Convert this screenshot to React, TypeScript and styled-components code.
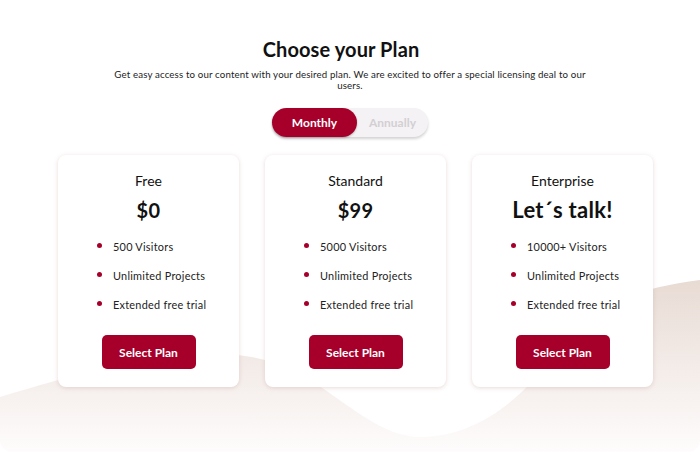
import React, { useState } from 'react';
import styled, { createGlobalStyle } from 'styled-components';

const GlobalStyle = createGlobalStyle`
  html, body {
    margin: 0;
    padding: 0;
    background: #ffffff;
  }
  body {
    font-family: Lato, "Noto Sans", sans-serif;
    color: #111;
  }
`;

const CRIMSON = '#a6002a';

type Plan = {
  name: string;
  price: string;
  wide?: boolean;
  features: string[];
};

const plans: Plan[] = [
  { name: 'Free', price: '$0', features: ['500 Visitors', 'Unlimited Projects', 'Extended free trial'] },
  { name: 'Standard', price: '$99', features: ['5000 Visitors', 'Unlimited Projects', 'Extended free trial'] },
  { name: 'Enterprise', price: 'Let´s talk!', wide: true, features: ['10000+ Visitors', 'Unlimited Projects', 'Extended free trial'] }
];

const Page = styled.div`
  position: relative;
  width: 700px;
  height: 452px;
  overflow: hidden;
  border-radius: 0 0 12px 12px;
  background: #fff;
`;

const Wave = styled.svg`
  position: absolute;
  left: 0;
  top: 0;
  width: 700px;
  height: 452px;
  z-index: 0;
`;

const Content = styled.main`
  position: relative;
  z-index: 1;
  display: flex;
  flex-direction: column;
  align-items: center;
  padding-top: 36px;
`;

const Title = styled.h1`
  margin: 0 18px 0 0;
  font-size: 20px;
  line-height: 26px;
  font-weight: 700;
  letter-spacing: 0.1px;
`;

const Subtitle = styled.p`
  margin: 7px 0 0;
  width: 480px;
  text-align: center;
  font-size: 9.7px;
  line-height: 11px;
  letter-spacing: 0.15px;
  color: #222;
`;

const Toggle = styled.div`
  margin-top: 17px;
  display: flex;
  width: 156px;
  height: 29px;
  border-radius: 15px;
  background: #f4f2f4;
  box-shadow: 0 2px 3px rgba(0, 0, 0, 0.18);
`;

const ToggleOption = styled.button<{ $active: boolean }>`
  border: none;
  padding: 0;
  height: 29px;
  border-radius: 15px;
  font-family: inherit;
  font-size: 12px;
  font-weight: 700;
  cursor: pointer;
  width: ${(p) => (p.$active ? '85px' : '71px')};
  background: ${(p) => (p.$active ? CRIMSON : 'transparent')};
  color: ${(p) => (p.$active ? '#fff' : '#d3cfd3')};
  box-shadow: ${(p) => (p.$active ? '0 1px 2px rgba(0,0,0,0.25)' : 'none')};
`;

const Cards = styled.section`
  margin: 18px 0 0 11px;
  display: flex;
  gap: 26px;
`;

const Card = styled.article`
  width: 181px;
  height: 232px;
  box-sizing: border-box;
  background: #fff;
  border-radius: 8px;
  box-shadow: 0 1px 4px rgba(190, 150, 140, 0.35);
  padding-top: 17px;
  display: flex;
  flex-direction: column;
  align-items: center;
`;

const PlanName = styled.h2`
  margin: 0;
  font-size: 14px;
  line-height: 18px;
  font-weight: 400;
`;

const Price = styled.div<{ $wide?: boolean }>`
  margin-top: 6px;
  font-size: ${(p) => (p.$wide ? '22px' : '20px')};
  line-height: 28px;
  font-weight: 700;
  letter-spacing: 0.3px;
`;

const Features = styled.ul`
  list-style: none;
  margin: 16px 0 0;
  padding: 0 0 0 39px;
  align-self: stretch;
  display: flex;
  flex-direction: column;
  gap: 15px;
`;

const Feature = styled.li`
  display: flex;
  align-items: center;
  font-size: 10.9px;
  line-height: 14px;
  letter-spacing: 0.25px;
  color: #222;

  &::before {
    content: '';
    width: 5px;
    height: 5px;
    border-radius: 50%;
    background: ${CRIMSON};
    margin-right: 11px;
    margin-top: -3px;
  }
`;

const SelectButton = styled.button`
  margin-top: 23px;
  width: 94px;
  height: 34px;
  border: none;
  border-radius: 5px;
  background: ${CRIMSON};
  color: #fff;
  font-family: inherit;
  font-size: 12px;
  font-weight: 700;
  cursor: pointer;
`;

export default function App() {
  const [period, setPeriod] = useState<'monthly' | 'annually'>('monthly');

  return (
    <Page>
      <GlobalStyle />
      <Wave viewBox="0 0 700 452" aria-hidden="true">
        <defs>
          <linearGradient id="waveFill" x1="0" y1="280" x2="0" y2="452" gradientUnits="userSpaceOnUse">
            <stop offset="0" stopColor="#e8dbd4" />
            <stop offset="1" stopColor="#fefcfc" />
          </linearGradient>
        </defs>
        <path
          d="M0,397 C90,370 190,340 265,360 C330,378 370,440 425,437 C480,434 520,400 560,350 C600,300 640,288 700,280 L700,452 L0,452 Z"
          fill="url(#waveFill)"
        />
      </Wave>
      <Content>
        <Title>Choose your Plan</Title>
        <Subtitle>
          Get easy access to our content with your desired plan. We are excited to offer a special licensing deal to our users.
        </Subtitle>
        <Toggle>
          <ToggleOption $active={period === 'monthly'} onClick={() => setPeriod('monthly')}>
            Monthly
          </ToggleOption>
          <ToggleOption $active={period === 'annually'} onClick={() => setPeriod('annually')}>
            Annually
          </ToggleOption>
        </Toggle>
        <Cards>
          {plans.map((plan) => (
            <Card key={plan.name}>
              <PlanName>{plan.name}</PlanName>
              <Price $wide={plan.wide}>{plan.price}</Price>
              <Features>
                {plan.features.map((f) => (
                  <Feature key={f}>{f}</Feature>
                ))}
              </Features>
              <SelectButton>Select Plan</SelectButton>
            </Card>
          ))}
        </Cards>
      </Content>
    </Page>
  );
}
